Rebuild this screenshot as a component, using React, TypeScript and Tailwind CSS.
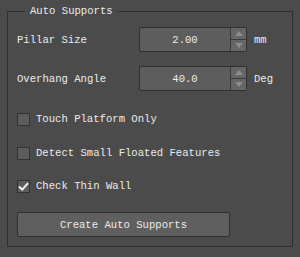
function SpinBox({ value }: { value: string }) {
  return (
    <div className="flex h-[25px] w-[108px] rounded-[2px] border border-[#303030] bg-[#5d5d5d]">
      <div className="flex flex-1 items-center justify-center text-[#ececec]">{value}</div>
      <div className="flex w-[16px] flex-col border-l border-[#3a3a3a]">
        <div className="flex flex-1 items-center justify-center bg-[#666666]">
          <svg width="8" height="5" viewBox="0 0 8 5">
            <path d="M0 5 L4 0 L8 5 Z" fill="#8c8c8c" />
          </svg>
        </div>
        <div className="flex flex-1 items-center justify-center border-t border-[#3a3a3a] bg-[#666666]">
          <svg width="8" height="5" viewBox="0 0 8 5">
            <path d="M0 0 L4 5 L8 0 Z" fill="#8c8c8c" />
          </svg>
        </div>
      </div>
    </div>
  );
}

function Field({ label, value, unit }: { label: string; value: string; unit: string }) {
  return (
    <div className="flex items-center">
      <span className="w-[122px]">{label}</span>
      <SpinBox value={value} />
      <span className="ml-[7px]">{unit}</span>
    </div>
  );
}

function CheckRow({ label, checked }: { label: string; checked?: boolean }) {
  return (
    <div className="flex h-[20px] items-center">
      <span className="flex h-[13px] w-[13px] items-center justify-center border border-[#333333] bg-[#5c5c5c]">
        {checked && (
          <svg width="11" height="11" viewBox="0 0 11 11">
            <path d="M1 5.5 L4.2 8.6 L10 2.2" fill="none" stroke="#f4f4f4" strokeWidth="2" />
          </svg>
        )}
      </span>
      <span className="ml-[6px]">{label}</span>
    </div>
  );
}

export default function App() {
  return (
    <div
      className="h-[257px] w-[300px] bg-[#4b4b4b] px-[7px] pt-[5px] text-[10.6px] leading-[12px] text-[#ebebeb]"
      style={{ fontFamily: '"Liberation Mono", monospace' }}
    >
      <fieldset className="h-[242px] border border-[#2f2f2f] px-[9px]">
        <legend className="ml-[8px] px-[5px]">Auto Supports</legend>
        <div className="mt-[10px] flex flex-col">
          <Field label="Pillar Size" value="2.00" unit="mm" />
          <div className="mt-[14px]">
            <Field label="Overhang Angle" value="40.0" unit="Deg" />
          </div>
          <div className="mt-[18px]">
            <CheckRow label="Touch Platform Only" />
          </div>
          <div className="mt-[14px]">
            <CheckRow label="Detect Small Floated Features" />
          </div>
          <div className="mt-[13px]">
            <CheckRow label="Check Thin Wall" checked />
          </div>
          <button
            type="button"
            className="mt-[16px] h-[25px] w-[213px] rounded-[2px] border border-[#303030] bg-[#5f5f5f] text-[#ebebeb]"
          >
            Create Auto Supports
          </button>
        </div>
      </fieldset>
    </div>
  );
}
